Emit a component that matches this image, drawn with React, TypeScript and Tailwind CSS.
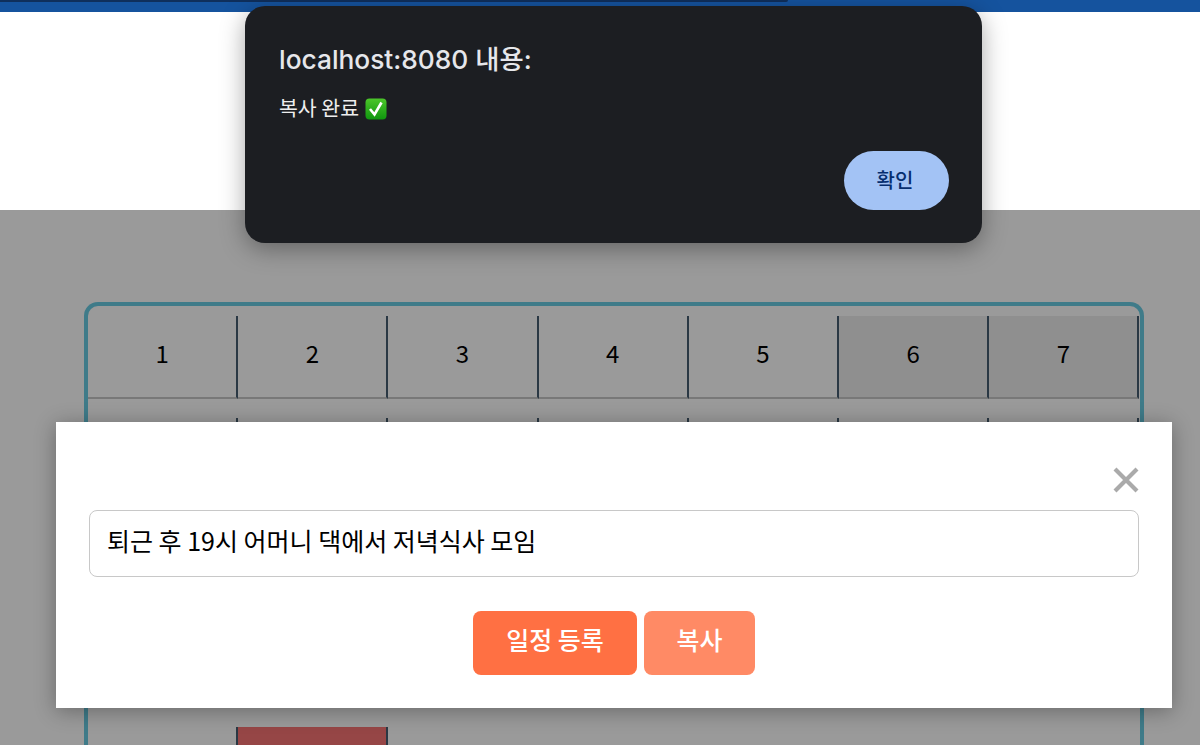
export default function App() {
  const cells = [1, 2, 3, 4, 5, 6, 7];
  const kr = { fontFamily: '"Noto Sans CJK KR", sans-serif' };
  return (
    <div className="relative h-[745px] w-[1200px] overflow-hidden bg-[#9a9a9a]" style={kr}>
      <div className="h-3 bg-[#15539e]">
        <div className="h-[2px] w-[788px] rounded-br-sm bg-[#0f2f5c]" />
      </div>
      <div className="h-[198px] bg-white" />
      <div className="pl-[84px] pt-[92px]">
        <div className="h-[500px] w-[1060px] rounded-t-[14px] border-x-4 border-t-4 border-[#3f7b89] pt-[10px]">
          <div className="grid w-[1051.5px] grid-cols-7">
            {cells.map((n) => (
              <div
                key={n}
                className={`flex h-[83px] items-center justify-center border-r-2 border-b-2 border-r-[#2a3844] border-b-[#787878] pb-[8px] text-[24px] text-black ${n > 5 ? "bg-[#8f8f8f]" : ""}`}
              >
                {n}
              </div>
            ))}
          </div>
          <div className="mt-[19px] grid w-[1051.5px] grid-cols-7">
            {cells.map((n) => (
              <div key={n} className="h-[20px] border-r-2 border-r-[#2a3844]" />
            ))}
          </div>
          <div className="mt-[289px] grid w-[1051.5px] grid-cols-7">
            {cells.map((n) => (
              <div
                key={n}
                className={`h-[60px] ${n === 2 ? "border-r-2 border-r-[#2a3844] bg-[#964646]" : n === 1 ? "border-r-2 border-r-[#2a3844]" : ""}`}
              />
            ))}
          </div>
        </div>
      </div>

      <div className="absolute left-[56px] top-[422px] flex h-[286px] w-[1116px] flex-col bg-white px-[33px] shadow-[0_3px_20px_rgba(0,0,0,0.32)]">
        <div className="flex h-[88px] items-start justify-end pt-[45px]">
          <svg width="26" height="26" viewBox="0 0 26 26" fill="none" stroke="#aaaaaa" strokeWidth="4.2">
            <path d="M2 2 L24 24 M24 2 L2 24" />
          </svg>
        </div>
        <div className="flex h-[67px] items-center rounded-lg border border-[#c8c8c8] px-[17px] pb-[6px] text-[25px] text-black">
          퇴근 후 19시 어머니 댁에서 저녁식사 모임
        </div>
        <div className="mt-[34px] flex justify-center gap-[7px] text-[25px] font-medium text-white">
          <div className="flex h-[64px] w-[164px] items-center justify-center rounded-lg bg-[#ff7043] pb-[7px]">일정 등록</div>
          <div className="flex h-[64px] w-[111px] items-center justify-center rounded-lg bg-[#ff8a65] pb-[7px]">복사</div>
        </div>
      </div>

      <div className="absolute left-[245px] top-[6px] h-[237px] w-[737px] rounded-[20px] bg-[#1c1e22] pl-[34px] pr-[33px] pt-[36px] shadow-[0_6px_24px_rgba(0,0,0,0.35)]">
        <div className="text-[26.3px] font-medium leading-[36px] text-[#e6e7eb]" style={{ fontFamily: 'Inter, "Noto Sans CJK KR", sans-serif' }}>
          localhost:8080 내용:
        </div>
        <div className="mt-[16px] flex items-center gap-[6px] text-[20.5px] leading-[26px] text-[#eeeeee]">
          <span className="pb-[3px]">복사 완료</span>
          <svg width="22" height="22" viewBox="0 0 22 22">
            <defs>
              <linearGradient id="emojiGreen" x1="0" y1="0" x2="0" y2="1">
                <stop offset="0" stopColor="#4cc62a" />
                <stop offset="1" stopColor="#0f960f" />
              </linearGradient>
            </defs>
            <rect x="0.5" y="0.5" width="21" height="21" rx="4" fill="url(#emojiGreen)" />
            <path d="M5 11 L9.5 16.5 L16.5 4.5" fill="none" stroke="#ffffff" strokeWidth="2.6" />
          </svg>
        </div>
        <div className="mt-[28px] flex justify-end">
          <div className="flex h-[59px] w-[105px] items-center justify-center rounded-full bg-[#a3c3f5] pb-[1px] pr-[3px] text-[20px] font-medium text-[#062e6f]">확인</div>
        </div>
      </div>
    </div>
  );
}
